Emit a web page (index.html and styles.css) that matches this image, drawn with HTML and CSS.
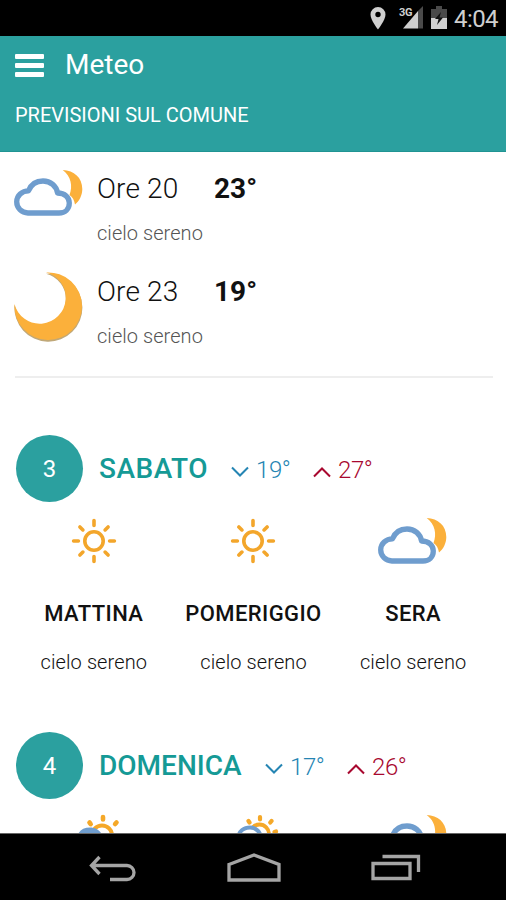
FILE: index.html
```html
<!DOCTYPE html>
<html lang="it">
<head>
    <meta charset="UTF-8">
    <meta name="viewport" content="width=device-width, initial-scale=1.0">
    <title>Meteo</title>
    <link rel="stylesheet" href="styles.css">
</head>
<body>
    <svg class="defs" width="0" height="0">
        <symbol id="cloud-moon" viewBox="0 0 70 48">
            <path d="M48.7 1C60 1.5 68.3 8.5 68.3 20C68.3 26 65.5 32 61 35.500C60.3 31 58.5 28 55.5 26C59 17 57 7 48.7 1Z" fill="#fbb03b"/>
            <path d="M14 44C7.500 44 2.700 39 2.700 32.800C2.700 26.500 8 21.800 14.500 21.800C17 15.500 22.500 12 29 12C36.500 12 42.500 17 43.500 24C51 24 55.300 28.500 55.300 34C55.300 40 51 44 45 44Z" fill="#fff" stroke="#6f9dce" stroke-width="5.300" stroke-linejoin="round"/>
        </symbol>
        <symbol id="sun" viewBox="0 0 46 46">
            <g fill="none" stroke="#f3a62b" stroke-width="3.600" stroke-linecap="round">
                <circle cx="23" cy="23" r="9.200"/>
                <path d="M23 2.600v4.800M23 38.600v4.800M2.600 23h4.800M38.600 23h4.800M8.900 8.900l3 3M34.100 34.100l3 3M37.100 8.900l-3 3M11.900 34.100l-3 3"/>
            </g>
        </symbol>
    </svg>

    <div class="status-bar">
        <svg class="pin" width="16" height="24" viewBox="0 0 16 24"><path fill-rule="evenodd" d="M8 1a7.500 7.500 0 0 0-7.500 7.500C.500 14 8 23.500 8 23.500S15.500 14 15.500 8.500A7.500 7.500 0 0 0 8 1zm0 4.800a2.700 2.700 0 1 1 0 5.400a2.700 2.700 0 0 1 0-5.400z" fill="#cfcfcf"/></svg>
        <div class="signal">
            <svg width="24" height="24" viewBox="0 0 24 24"><path d="M24 1v22.500h-5V6z" fill="#4a4a4a"/><path d="M19 6v17.500H4z" fill="#cfcfcf"/></svg>
            <span class="network">3G</span>
        </div>
        <svg class="battery" width="16" height="23" viewBox="0 0 16 23"><path d="M5 0h6v3h5v9H0V3h5z" fill="#4a4a4a"/><path d="M0 12h16v11H0z" fill="#cfcfcf"/><path d="M10 6l-6 7h3.500L6 19l6-7.500H8.500z" fill="#111"/></svg>
        <span class="clock">4:04</span>
    </div>

    <header class="header">
        <div class="title-row">
            <div class="menu"><i></i><i></i><i></i></div>
            <h1 class="title">Meteo</h1>
        </div>
        <p class="subtitle">PREVISIONI SUL COMUNE</p>
    </header>

    <main class="content">
        <section class="hours">
            <div class="hour">
                <svg class="hour-icon" width="70" height="48"><use href="#cloud-moon"/></svg>
                <div class="hour-text">
                    <div class="hour-line"><span class="hour-name">Ore 20</span><span class="hour-temp">23°</span></div>
                    <p class="hour-sky">cielo sereno</p>
                </div>
            </div>
            <div class="hour">
                <svg class="hour-icon" width="70" height="70" viewBox="0 0 70 70"><path d="M32 1.800A34 34 0 1 1 .500 33A26 26 0 1 0 32 1.800Z" fill="#c0a878"/><path d="M32 .500A33.800 33.800 0 1 1 .500 32A26 26 0 1 0 32 .500Z" fill="#fbb03b"/></svg>
                <div class="hour-text">
                    <div class="hour-line"><span class="hour-name">Ore 23</span><span class="hour-temp">19°</span></div>
                    <p class="hour-sky">cielo sereno</p>
                </div>
            </div>
        </section>

        <section class="day">
            <div class="day-head">
                <span class="day-number">3</span>
                <h2 class="day-name sabato">SABATO</h2>
                <span class="temp min"><svg width="18" height="12" viewBox="0 0 18 12"><path d="M1 1.500l8 8 8-8"/></svg><span>19°</span></span>
                <span class="temp max"><svg width="18" height="12" viewBox="0 0 18 12"><path d="M1 10.500l8-8 8 8"/></svg><span>27°</span></span>
            </div>
            <div class="periods">
                <div class="period">
                    <svg class="period-icon" width="46" height="46"><use href="#sun"/></svg>
                    <h3 class="period-name">MATTINA</h3>
                    <p class="period-sky">cielo sereno</p>
                </div>
                <div class="period">
                    <svg class="period-icon" width="46" height="46"><use href="#sun"/></svg>
                    <h3 class="period-name">POMERIGGIO</h3>
                    <p class="period-sky">cielo sereno</p>
                </div>
                <div class="period">
                    <svg class="period-icon" width="70" height="48"><use href="#cloud-moon"/></svg>
                    <h3 class="period-name">SERA</h3>
                    <p class="period-sky">cielo sereno</p>
                </div>
            </div>
        </section>

        <section class="day">
            <div class="day-head">
                <span class="day-number">4</span>
                <h2 class="day-name domenica">DOMENICA</h2>
                <span class="temp min"><svg width="18" height="12" viewBox="0 0 18 12"><path d="M1 1.500l8 8 8-8"/></svg><span>17°</span></span>
                <span class="temp max"><svg width="18" height="12" viewBox="0 0 18 12"><path d="M1 10.500l8-8 8 8"/></svg><span>26°</span></span>
            </div>
            <div class="periods">
                <div class="period">
                    <svg class="period-icon" width="60" height="48" viewBox="0 0 60 48">
                        <g fill="none" stroke="#f5a828" stroke-linecap="round"><circle cx="38" cy="21.500" r="10" stroke-width="4"/><path stroke-width="4.600" d="M39 3v2.500M25.500 8.500l1.200 1.600M52.500 8.500l-1.400 1.600"/></g>
                        <path d="M14 44a10 10 0 0 1-1-20C14 17 19 13.500 26 13.500S38 18 39 24a10 10 0 0 1 6 20z" fill="#6f9dce"/>
                    </svg>
                </div>
                <div class="period">
                    <svg class="period-icon" width="60" height="48" viewBox="0 0 60 48">
                        <g fill="none" stroke="#f5a828" stroke-linecap="round"><circle cx="36.500" cy="20" r="9.500" stroke-width="3.800"/><path stroke-width="4.200" d="M37 3v2.500M25.500 7l1 1.500M48.500 7l-1.200 1.500M53 17.500l-1.500.500"/></g>
                        <path d="M15 42a9 9 0 0 1 0-18C16 17 21 13.500 27 13.500S37.500 18 38 24a9 9 0 0 1 5 18z" fill="#fff" stroke="#6f9dce" stroke-width="4"/>
                    </svg>
                </div>
                <div class="period">
                    <svg class="period-icon" width="70" height="48"><use href="#cloud-moon"/></svg>
                </div>
            </div>
        </section>
    </main>

    <nav class="nav-bar">
        <svg width="48" height="28" viewBox="0 0 48 28"><path d="M10.500 3L2.500 11.500l8 8.500M2.500 11.500H38a7 7 0 0 1 0 14H21"/></svg>
        <svg width="54" height="30" viewBox="0 0 54 30"><path d="M2 11.500L27 2l25 9.500V27H2z"/></svg>
        <svg width="50" height="28" viewBox="0 0 50 28"><path d="M2 9.500h37v15H2zM11.500 2.500H47.500V18"/></svg>
    </nav>
</body>
</html>
```
FILE: styles.css
```css
* {
    box-sizing: border-box;
    margin: 0;
    padding: 0;
}
body {
    display: flex;
    flex-direction: column;
    height: 900px;
    overflow: hidden;
    background: #fff;
    font-family: Roboto, "Liberation Sans", sans-serif;
    color: #111;
}
svg {
    display: block;
    flex: none;
}
.defs {
    position: absolute;
}

/* status bar */
.status-bar {
    display: flex;
    flex: none;
    justify-content: flex-end;
    height: 36px;
    padding: 5px 8px 0 0;
    background: #000;
}
.pin {
    margin: 1px 13px 0 0;
}
.signal {
    position: relative;
    margin-right: 8px;
}
.network {
    position: absolute;
    top: 2px;
    left: 0;
    font-size: 11px;
    line-height: 11px;
    font-weight: 700;
    letter-spacing: -0.5px;
    color: #cfcfcf;
    background: #000;
}
.battery {
    margin: 1px 7px 0 0;
}
.clock {
    font-size: 24px;
    line-height: 28px;
    letter-spacing: -0.6px;
    color: #cfcfcf;
}

/* header */
.header {
    flex: none;
    height: 116px;
    padding: 10px 15px 0;
    background: #2ba09f;
    border-bottom: 1px solid #209493;
    color: #fff;
}
.title-row {
    display: flex;
    align-items: center;
    gap: 21px;
    height: 36px;
}
.menu {
    display: flex;
    flex-direction: column;
    gap: 4px;
    padding-top: 3px;
}
.menu i {
    width: 29px;
    height: 5px;
    border-radius: 1px;
    background: #fff;
}
.title {
    font-size: 28px;
    font-weight: 400;
}
.subtitle {
    margin-top: 21px;
    font-size: 20px;
    line-height: 24px;
}

/* hourly forecast */
.content {
    flex: 1;
    min-height: 0;
    overflow: hidden;
    padding: 0 13px 0 14px;
}
.hours {
    height: 226px;
    padding-top: 17px;
    margin-left: 1px;
    border-bottom: 2px solid #eee;
}
.hour {
    display: flex;
    gap: 13px;
    height: 103px;
    margin-left: -1px;
}
.hour-line {
    display: flex;
    height: 40px;
    font-size: 28px;
    line-height: 40px;
}
.hour-name {
    width: 117px;
    font-weight: 300;
    letter-spacing: 0.15px;
}
.hour-temp {
    font-weight: 700;
}
.hour-sky {
    margin-top: 11px;
    font-size: 20px;
    line-height: 26px;
    font-weight: 300;
    letter-spacing: 0.05px;
    color: #555;
}

/* daily forecast */
.day {
    height: 297px;
    padding-top: 57px;
}
.day-head {
    display: flex;
    align-items: center;
    height: 67px;
    padding-left: 2px;
}
.day-number {
    width: 67px;
    height: 67px;
    margin-right: 16px;
    border-radius: 50%;
    background: #2ba09f;
    color: #fff;
    font-size: 24px;
    line-height: 68px;
    text-align: center;
}
.day-name {
    font-size: 28px;
    font-weight: 500;
    color: #159a96;
}
.sabato {
    width: 132px;
    letter-spacing: 0.5px;
}
.domenica {
    width: 166px;
}
.temp {
    display: flex;
    align-items: center;
    gap: 7px;
    width: 82px;
    padding-top: 3px;
    font-size: 24px;
    font-weight: 300;
    letter-spacing: -0.4px;
}
.temp svg {
    margin-top: 4px;
    fill: none;
    stroke: currentColor;
    stroke-width: 2;
}
.min {
    color: #2585b3;
}
.max {
    color: #a8082f;
}
.periods {
    display: grid;
    grid-template-columns: repeat(3, 1fr);
    padding-top: 15px;
}
.period {
    display: flex;
    flex-direction: column;
    align-items: center;
}
.period-icon {
    height: 48px;
}
.period-name {
    margin-top: 36px;
    font-size: 22px;
    line-height: 26px;
    font-weight: 500;
    letter-spacing: 0.4px;
}
.period-sky {
    margin-top: 22px;
    font-size: 20px;
    line-height: 26px;
    font-weight: 300;
    letter-spacing: 0.1px;
}

/* navigation bar */
.nav-bar {
    display: flex;
    flex: none;
    align-items: center;
    justify-content: space-between;
    height: 67px;
    padding: 2px 85px 0 89px;
    background: #000;
    border-top: 1px solid #666;
}
.nav-bar svg {
    fill: none;
    stroke: #a5a5a5;
    stroke-width: 3.3;
}
```
